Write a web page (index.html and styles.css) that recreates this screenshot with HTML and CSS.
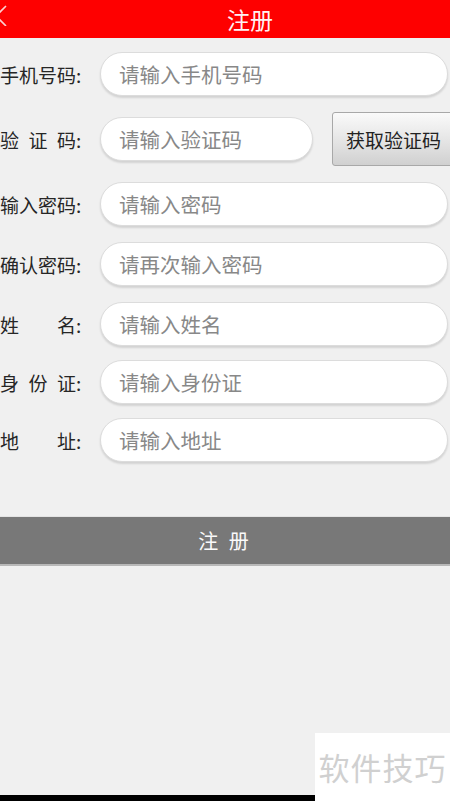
FILE: index.html
```html
<!DOCTYPE html>
<html lang="zh-CN">
<head>
  <meta charset="UTF-8" />
  <meta name="viewport" content="width=device-width, initial-scale=1.0"/>
  <title>注册</title>
  <link rel="stylesheet" href="styles.css">
</head>
<body>
  <div class="header">
    <svg class="back" width="8" height="24" viewBox="0 0 8 24"><polyline points="6,4 -4,14 6,24" fill="none" stroke="#fbd0d0" stroke-width="1.6"/></svg>
    <h1>注册</h1>
  </div>

  <div class="form">
    <div class="row">
      <label><span class="lbl">手机号码</span>:</label>
      <input type="text" placeholder="请输入手机号码">
    </div>
    <div class="row row-code">
      <label><span class="lbl">验证码</span>:</label>
      <input type="text" placeholder="请输入验证码">
      <button class="code-btn">获取验证码</button>
    </div>
    <div class="row">
      <label><span class="lbl">输入密码</span>:</label>
      <input type="password" placeholder="请输入密码">
    </div>
    <div class="row">
      <label><span class="lbl">确认密码</span>:</label>
      <input type="password" placeholder="请再次输入密码">
    </div>
    <div class="row">
      <label><span class="lbl">姓名</span>:</label>
      <input type="text" placeholder="请输入姓名">
    </div>
    <div class="row">
      <label><span class="lbl">身份证</span>:</label>
      <input type="text" placeholder="请输入身份证">
    </div>
    <div class="row">
      <label><span class="lbl">地址</span>:</label>
      <input type="text" placeholder="请输入地址">
    </div>
  </div>

  <button class="submit">注 册</button>

  <div class="watermark">软件技巧</div>
  <div class="bottom-bar"></div>
</body>
</html>
```

FILE: styles.css
```css
body {
  margin: 0;
  background-color: #f0f0f0;
  font-family: "Noto Sans CJK SC", "Noto Sans", sans-serif;
  width: 450px;
  height: 801px;
  overflow: hidden;
  position: relative;
}
.header {
  height: 38px;
  background-color: #fe0000;
  display: flex;
  align-items: center;
  justify-content: center;
  position: relative;
}
.header h1 {
  margin: 0 0 0 50px;
  font-size: 23px;
  font-weight: normal;
  color: #fff3f3;
  line-height: 38px;
}
.back {
  position: absolute;
  left: 0;
  top: 2px;
}
.form {
  display: flex;
  flex-direction: column;
  gap: 16px;
  padding-top: 14px;
}
.row {
  display: flex;
  align-items: center;
  height: 44px;
}
.row-code {
  height: 54px;
}
.row:nth-child(6) { margin-top: -2px; }
.row:nth-child(7) { margin-top: -2px; }
label {
  width: 100px;
  font-size: 19px;
  color: #262626;
  display: flex;
  flex-shrink: 0;
}
.lbl {
  display: inline-block;
  width: 76px;
  text-align: justify;
  text-align-last: justify;
}
input {
  flex: 1;
  height: 44px;
  box-sizing: border-box;
  margin-right: 2px;
  border: 1px solid #dcdcdc;
  border-radius: 22px;
  background-color: #fff;
  box-shadow: 0 2px 2px rgba(0, 0, 0, 0.12);
  padding: 0 18px;
  font-family: inherit;
  font-size: 20.5px;
  color: #333;
  outline: none;
  min-width: 0;
}
input::placeholder {
  color: #888888;
}
.row-code input {
  flex: none;
  width: 213px;
  margin-right: 19px;
}
.code-btn {
  flex-shrink: 0;
  width: 124px;
  height: 54px;
  border: 1px solid #a8a8a8;
  border-radius: 3px;
  background: linear-gradient(#fafafa, #e2e2e2 60%, #d0d0d0);
  font-family: inherit;
  font-size: 19px;
  color: #222;
  padding: 0 0 0 2px;
  text-align: left;
  text-indent: 11px;
}
.submit {
  display: block;
  width: 450px;
  height: 50px;
  margin-top: 54px;
  border: none;
  border-top: 1px solid #e4e4e4;
  border-bottom: 2px solid #b8b8b8;
  background-color: #787878;
  color: #fafafa;
  font-family: inherit;
  font-size: 20px;
  letter-spacing: 3px;
  padding: 0;
}
.watermark {
  position: absolute;
  right: 0;
  bottom: 0;
  width: 135px;
  height: 68px;
  background-color: #fff;
  color: #d0d0d0;
  font-size: 31px;
  line-height: 68px;
  text-align: center;
  letter-spacing: 1px;
}
.bottom-bar {
  position: absolute;
  left: 0;
  bottom: 0;
  width: 315px;
  height: 6px;
  background-color: #000;
}
```
